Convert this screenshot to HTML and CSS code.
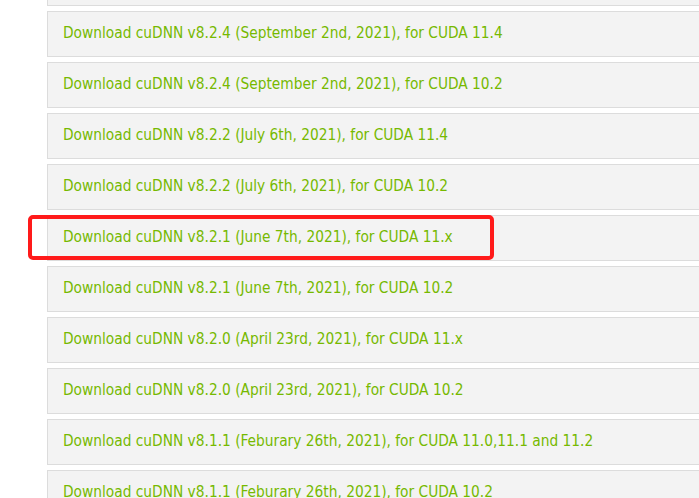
FILE: index.html
```html
<!DOCTYPE html>
<html>
<head>
<meta charset="utf-8">
<link rel="stylesheet" href="styles.css">
</head>
<body>
<div class="page">
  <ul class="list">
    <li class="row"><a>Download cuDNN v8.2.4 (September 2nd, 2021), for CUDA 11.4</a></li>
    <li class="row"><a>Download cuDNN v8.2.4 (September 2nd, 2021), for CUDA 11.4</a></li>
    <li class="row"><a>Download cuDNN v8.2.4 (September 2nd, 2021), for CUDA 10.2</a></li>
    <li class="row"><a>Download cuDNN v8.2.2 (July 6th, 2021), for CUDA 11.4</a></li>
    <li class="row"><a>Download cuDNN v8.2.2 (July 6th, 2021), for CUDA 10.2</a></li>
    <li class="row highlighted"><a>Download cuDNN v8.2.1 (June 7th, 2021), for CUDA 11.x</a><span class="mark"></span></li>
    <li class="row"><a>Download cuDNN v8.2.1 (June 7th, 2021), for CUDA 10.2</a></li>
    <li class="row"><a>Download cuDNN v8.2.0 (April 23rd, 2021), for CUDA 11.x</a></li>
    <li class="row"><a>Download cuDNN v8.2.0 (April 23rd, 2021), for CUDA 10.2</a></li>
    <li class="row"><a>Download cuDNN v8.1.1 (Feburary 26th, 2021), for CUDA 11.0,11.1 and 11.2</a></li>
    <li class="row"><a>Download cuDNN v8.1.1 (Feburary 26th, 2021), for CUDA 10.2</a></li>
  </ul>
</div>
</body>
</html>
```
FILE: styles.css
```css
html, body {
  margin: 0;
  padding: 0;
  background: #ffffff;
  overflow: hidden;
}
.page {
  width: 699px;
  height: 498px;
  overflow: hidden;
  padding-left: 47px;
  box-sizing: border-box;
}
.list {
  list-style: none;
  margin: -40px 0 0 0;
  padding: 0;
  display: flex;
  flex-direction: column;
  gap: 5px;
  width: 700px;
}
.row {
  position: relative;
  height: 44px;
  background: #f3f3f3;
  border: 1px solid #dcdcdc;
  border-right: none;
  display: flex;
  align-items: center;
  padding-left: 15px;
  padding-bottom: 2px;
  box-sizing: content-box;
}
.row {
  height: 42px;
}
.row a {
  font-family: "DejaVu Sans Condensed", "DejaVu Sans", sans-serif;
  font-size: 15.3px;
  color: #76b900;
  white-space: nowrap;
}
.mark {
  position: absolute;
  left: -20px;
  top: -1px;
  width: 466px;
  height: 45px;
  border: 4px solid #ff1a1a;
  border-radius: 5px;
  box-sizing: border-box;
}
```
